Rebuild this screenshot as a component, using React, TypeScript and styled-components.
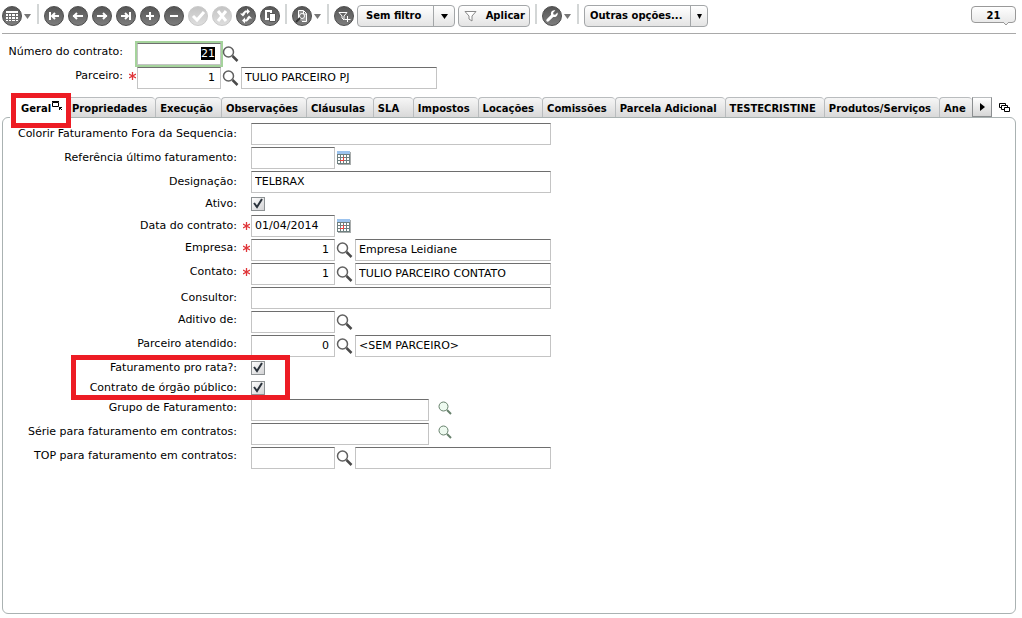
import React, { useEffect, useRef } from "react";
import styled, { createGlobalStyle, css } from "styled-components";

const GlobalStyle = createGlobalStyle`
  * { box-sizing: border-box; }
  body {
    margin: 0;
    background: #fff;
    color: #000;
    font-family: Verdana, "DejaVu Sans", sans-serif;
    font-size: 11px;
    line-height: 14px;
    overflow: hidden;
  }
  button, input, select { font: inherit; color: inherit; }
`;

const Page = styled.div`
  display: flex;
  flex-direction: column;
  min-height: 100vh;
  padding: 0 6px 4px 2px;
`;

const Toolbar = styled.header`
  display: flex;
  align-items: center;
  gap: 4px;
  height: 34px;
  padding-bottom: 1px;
  border-bottom: 1px solid #a9a9a9;
`;

const Divider = styled.span`
  width: 2px;
  height: 20px;
  margin: 0 1px 4px;
  background: #d3d6d6;
`;

const RoundButton = styled.button`
  flex: none;
  display: block;
  width: 20px;
  height: 20px;
  padding: 0;
  border: 1px solid #4c4c4c;
  border-radius: 50%;
  background: linear-gradient(#565656, #7d7d7d);
  color: #fff;

  &:disabled {
    border-color: #c9c9c9;
    background: linear-gradient(#c4c4c4, #dedede);
  }
  svg { display: block; }
`;

const MenuButton = styled.div`
  display: flex;
  align-items: center;
  gap: 2px;
  width: 30px;
`;

const ControlGroup = styled.div`
  display: flex;
  align-items: center;
  gap: 3px;
`;

const raised = css`
  height: 22px;
  border: 1px solid #a3a6a8;
  border-radius: 4px;
  background: linear-gradient(#fff, #e4e4e4);
  font-size: 10px;
  font-weight: bold;
`;

const SelectBox = styled.div<{ $width: number; $arrow: number }>`
  position: relative;
  width: ${(p) => p.$width}px;

  select {
    ${raised}
    display: block;
    width: 100%;
    padding: 0 0 0 ${(p) => (p.$arrow > 18 ? 8 : 5)}px;
    appearance: none;
  }
  > span {
    position: absolute;
    top: 1px;
    right: 1px;
    bottom: 1px;
    display: flex;
    align-items: center;
    justify-content: center;
    width: ${(p) => p.$arrow}px;
    border-left: 1px solid #a3a6a8;
    pointer-events: none;
  }
`;

const ApplyButton = styled.button`
  ${raised}
  display: flex;
  align-items: center;
  justify-content: space-between;
  width: 72px;
  padding: 0 4px 0 5px;
`;

const Counter = styled.output`
  position: relative;
  width: 45px;
  height: 17px;
  margin: 0 0 3px auto;
  border: 1px solid #999;
  border-radius: 4px;
  background: linear-gradient(#fff, #e9e9e9);
  font-size: 10px;
  font-weight: bold;
  line-height: 18px;
  text-align: center;

  svg {
    position: absolute;
    top: 15px;
    right: 5px;
  }
`;

const HeaderForm = styled.form`
  padding: 8px 0 7px;
`;

const Row = styled.div<{ $labelWidth: number; $short?: boolean }>`
  display: grid;
  grid-template-columns: ${(p) => p.$labelWidth}px 14px auto;
  justify-content: start;
  align-items: center;
  height: ${(p) => (p.$short ? 20 : 24)}px;
`;

const Label = styled.label<{ $raised?: boolean }>`
  padding-bottom: ${(p) => (p.$raised ? 4 : 0)}px;
  text-align: right;
  white-space: nowrap;
`;

const Star = styled.span<{ $raised?: boolean }>`
  display: flex;
  justify-content: flex-end;
  padding: 0 1px ${(p) => (p.$raised ? 4 : 0)}px 0;
`;

const Controls = styled.div`
  display: flex;
  align-items: center;
`;

const Field = styled.input<{ $size: "code" | "name" | "group" | "full" }>`
  width: ${(p) => ({ code: 84, name: 196, group: 178, full: 300 })[p.$size]}px;
  height: 22px;
  padding: 0 5px 2px 3px;
  border: 1px solid #c4c4c4;
  border-top-color: #6e6e6e;
  border-radius: 0;
  background: #fff;
  outline: none;

  &:focus { outline: 2px solid #a5d39c; }
  &::selection { background: #000; color: #fff; }
`;

const NumberField = styled(Field)`
  text-align: right;
`;

const IconButton = styled.button<{ $far?: boolean }>`
  display: block;
  width: 20px;
  height: 20px;
  margin-left: ${(p) => (p.$far ? 8 : 0)}px;
  padding: 0 0 0 1px;
  border: 0;
  background: none;
  svg { display: block; }
`;

const Tick = styled.input`
  width: 14px;
  height: 14px;
  margin: 0;
  border: 1px solid #8e9294;
  appearance: none;
  background: linear-gradient(135deg, #fff, #d2d2d4);
`;

const TickBox = styled.span`
  position: relative;
  display: flex;
  svg {
    position: absolute;
    left: 0;
    top: 0;
    pointer-events: none;
  }
  input:not(:checked) + svg { display: none; }
`;

const TabBar = styled.div`
  display: flex;
  align-items: flex-end;
  padding: 0 5px 0 8px;
`;

const TabStrip = styled.nav`
  display: flex;
  flex: 1;
  min-width: 0;
  height: 20px;
`;

const tabShape = css`
  flex: none;
  height: 20px;
  padding: 2px 8px 0 4px;
  font-size: 10px;
  font-weight: bold;
  text-align: left;
  white-space: nowrap;
`;

const Tab = styled.button`
  ${tabShape}
  min-width: 40px;
  border: 1px solid #b9bcbe;
  border-width: 1px 0 0 1px;
  border-radius: 4px 4px 0 0;
  background: linear-gradient(#f6f6f6, #d9d9d9);

  &:last-child {
    flex: 1 1 0;
    min-width: 0;
    padding-right: 0;
    overflow: hidden;
  }
`;

const ActiveTab = styled.button`
  ${tabShape}
  position: relative;
  z-index: 1;
  display: flex;
  gap: 1px;
  width: 57px;
  height: 21px;
  padding: 5px 0 0 11px;
  border: 0;
  background: #fff;

  > svg { margin-top: -1px; }
`;

const Highlight = styled.span<{ $area: "tab" | "rows" }>`
  position: absolute;
  border: 5px solid #ed1c24;
  pointer-events: none;
  ${(p) =>
    p.$area === "tab"
      ? "inset: -4px -4px -10px 1px;"
      : "left: 68px; top: -3px; width: 219px; bottom: -2px;"}
`;

const ScrollButton = styled.button`
  display: flex;
  align-items: center;
  justify-content: center;
  width: 20px;
  height: 20px;
  padding: 0;
  border: 1px solid #8b8e90;
  border-top-color: #b9bcbe;
  background: linear-gradient(#fff, #d6d6d6);
`;

const ListButton = styled.button`
  width: 12px;
  height: 14px;
  margin: 0 0 2px 7px;
  padding: 0;
  border: 0;
  background: none;
  svg { display: block; }
`;

const Panel = styled.form`
  flex: 1;
  padding-top: 4px;
  border: 1px solid #aab2b2;
  border-radius: 6px;
`;

const MarkedRows = styled.div`
  position: relative;
`;

const glyphs = {
  grid: (
    <path
      fill="currentColor"
      d="M3 4h12v2H3zM3 7h2v2H3zM6 7h2v2H6zM9 7h3v2H9zM13 7h2v2h-2zM3 10h2v2H3zM6 10h2v2H6zM9 10h3v2H9zM13 10h2v2h-2zM3 13h2v1H3zM6 13h2v1H6zM9 13h3v1H9zM13 13h2v1h-2z"
    />
  ),
  first: <path stroke="currentColor" strokeWidth="2" d="M5 5v8M7 9h7M10 6L7 9l3 3" />,
  prev: <path stroke="currentColor" strokeWidth="2" d="M4 9h10M8 6L5 9l3 3" />,
  next: <path stroke="currentColor" strokeWidth="2" d="M4 9h10M10 6l3 3-3 3" />,
  last: <path stroke="currentColor" strokeWidth="2" d="M13 5v8M4 9h7M8 6l3 3-3 3" />,
  plus: <path stroke="currentColor" strokeWidth="2" d="M5 9h8M9 5v8" />,
  minus: <path stroke="currentColor" strokeWidth="2" d="M5 9h8" />,
  check: <path stroke="currentColor" strokeWidth="3" d="M4 9l4 4 7-8" />,
  cross: <path stroke="currentColor" strokeWidth="3" d="M5 4l8 10M13 4L5 14" />,
  refresh: (
    <>
      <path stroke="currentColor" strokeWidth="2" d="M11 4.500H8.500L6 7M7 13.500h2.500L12 11" />
      <path fill="currentColor" d="M10 1.500l3 3-3 3zM8 10.500l-3 3 3 3zM3 6.500h5.500l-2.500 3zM9.500 11.500H15l-3-3z" />
    </>
  ),
  copy: (
    <>
      <path stroke="currentColor" strokeWidth="2" d="M8 12H5V4h5v2" />
      <path fill="currentColor" stroke="#555" d="M8.500 6.500h6v8h-6z" />
    </>
  ),
  preview: (
    <>
      <path fill="currentColor" fillOpacity="0.3" stroke="currentColor" d="M5.500 12V3.500h5l3 3v8H9M10.500 4v3h3" />
      <circle cx="9" cy="9" r="2.500" fill="#777" stroke="currentColor" />
      <path stroke="#333" strokeWidth="2" d="M7 11l-4 4" />
    </>
  ),
  filterPlus: (
    <>
      <path stroke="currentColor" d="M4 5.500h8L9 9v4l-2-2V9z" />
      <path stroke="currentColor" d="M12.500 9v6M9.500 12.500h6" />
    </>
  ),
  wrench: (
    <path
      fill="currentColor"
      d="M14.500 5.500l-2.300 2.200-1.700-.3-.4-1.700L12.300 3.500C10.500 2.800 8 4.100 7.900 6.400c0 .5.100 1 .2 1.400l-4.400 4.400c-1.300 1.500.6 3.500 2.100 2.100l4.400-4.400c2.900 1 5.200-1.900 4.300-4.400z"
    />
  ),
};

function Tool({ icon, label, disabled }: { icon: keyof typeof glyphs; label: string; disabled?: boolean }) {
  return (
    <RoundButton type="button" aria-label={label} disabled={disabled}>
      <svg width="18" height="18" viewBox="0 0 18 18" fill="none">
        {glyphs[icon]}
      </svg>
    </RoundButton>
  );
}

function Arrow({ color = "#000", width = 7 }: { color?: string; width?: number }) {
  return (
    <svg width={width} height="5" viewBox="0 0 7 5" preserveAspectRatio="none" aria-hidden="true">
      <path d="M0 0h7L3.500 5z" fill={color} />
    </svg>
  );
}

function Search({ small, label }: { small?: boolean; label: string }) {
  return (
    <IconButton type="button" aria-label={"Pesquisar " + label} $far={small}>
      {small ? (
        <svg width="18" height="20" viewBox="0 0 18 20" fill="none">
          <circle cx="5.500" cy="6.500" r="4.500" fill="#eefaf0" stroke="#66806b" />
          <path d="M9 10l4 4" stroke="#66806b" strokeWidth="2" />
        </svg>
      ) : (
        <svg width="18" height="20" viewBox="0 0 18 20" fill="none">
          <circle cx="6.500" cy="8" r="5" fill="#fff" stroke="#606060" strokeWidth="1.500" />
          <path d="M10.500 12l5 5" stroke="#4a4a4a" strokeWidth="2.500" />
        </svg>
      )}
    </IconButton>
  );
}

function Calendar({ label }: { label: string }) {
  return (
    <IconButton type="button" aria-label={"Calendário " + label}>
      <svg width="18" height="20" viewBox="0 0 18 20">
        <path d="M2 4h13v13H2z" fill="#a9adad" />
        <path d="M1 3h13v13H1z" fill="#6f8080" />
        <path d="M1 3h13v3H1z" fill="#9cc3ee" />
        <path
          d="M2 7h2v2H2zM5 7h2v2H5zM8 7h2v2H8zM11 7h2v2h-2zM2 10h2v2H2zM5 10h2v2H5zM8 10h2v2H8zM11 10h2v2h-2zM2 13h2v2H2zM5 13h2v2H5zM8 13h2v2H8zM11 13h2v2h-2z"
          fill="#fff"
        />
        <path d="M4 12.500h4M7.500 9v4" stroke="#f0403c" fill="none" />
      </svg>
    </IconButton>
  );
}

function Required() {
  return (
    <svg width="7" height="8" viewBox="0 0 7 8" aria-hidden="true">
      <path d="M3.500 0v8M0 2l7 4M7 2L0 6" stroke="#e0363a" strokeWidth="1.300" />
    </svg>
  );
}

type RowProps = {
  id: string;
  label: string;
  kind: "text" | "date" | "lookup" | "group" | "check";
  value?: string;
  name?: string;
  required?: boolean;
  labelWidth?: number;
  focused?: boolean;
};

function FormRow({ id, label, kind, value = "", name, required, labelWidth = 234, focused }: RowProps) {
  const ref = useRef<HTMLInputElement>(null);
  useEffect(() => {
    if (focused) {
      ref.current?.focus();
      ref.current?.select();
    }
  }, [focused]);
  const lifted = kind === "lookup" || kind === "group";

  return (
    <Row $labelWidth={labelWidth} $short={kind === "check"}>
      <Label htmlFor={id} $raised={lifted}>
        {label}:
      </Label>
      <Star $raised={lifted}>{required && <Required />}</Star>
      <Controls>
        {kind === "text" && <Field id={id} $size="full" defaultValue={value} />}
        {kind === "date" && (
          <>
            <Field id={id} $size="code" defaultValue={value} />
            <Calendar label={label} />
          </>
        )}
        {kind === "lookup" && (
          <>
            <NumberField id={id} ref={ref} $size="code" defaultValue={value} />
            <Search label={label} />
            {name !== undefined && (
              <Field $size="name" aria-label={label + " - nome"} defaultValue={name} />
            )}
          </>
        )}
        {kind === "group" && (
          <>
            <Field id={id} $size="group" defaultValue={value} />
            <Search small label={label} />
          </>
        )}
        {kind === "check" && (
          <TickBox>
            <Tick id={id} type="checkbox" defaultChecked />
            <svg width="14" height="14" viewBox="0 0 14 14" fill="none">
              <path d="M3 6l3 4 5-8" stroke="#2b333c" strokeWidth="2" />
            </svg>
          </TickBox>
        )}
      </Controls>
    </Row>
  );
}

const tabs = [
  "Propriedades",
  "Execução",
  "Observações",
  "Cláusulas",
  "SLA",
  "Impostos",
  "Locações",
  "Comissões",
  "Parcela Adicional",
  "TESTECRISTINE",
  "Produtos/Serviços",
  "Ane",
];

export default function App() {
  return (
    <Page>
      <GlobalStyle />
      <Toolbar>
        <MenuButton>
          <Tool icon="grid" label="Modo grade" />
          <Arrow color="#777" />
        </MenuButton>
        <Divider />
        <Tool icon="first" label="Primeiro" />
        <Tool icon="prev" label="Anterior" />
        <Tool icon="next" label="Próximo" />
        <Tool icon="last" label="Último" />
        <Tool icon="plus" label="Incluir" />
        <Tool icon="minus" label="Excluir" />
        <Tool icon="check" label="Confirmar" disabled />
        <Tool icon="cross" label="Cancelar" disabled />
        <Tool icon="refresh" label="Atualizar" />
        <Tool icon="copy" label="Duplicar" />
        <Divider />
        <MenuButton>
          <Tool icon="preview" label="Visualizar" />
          <Arrow color="#777" />
        </MenuButton>
        <Divider />
        <ControlGroup>
          <Tool icon="filterPlus" label="Novo filtro" />
          <SelectBox $width={98} $arrow={21}>
            <select aria-label="Filtro">
              <option>Sem filtro</option>
            </select>
            <span>
              <Arrow />
            </span>
          </SelectBox>
          <ApplyButton type="button">
            <svg width="13" height="12" viewBox="0 0 13 12" fill="none">
              <path d="M1 1.500h11L8 6v5L5 9V6z" fill="#fff" stroke="#888" />
            </svg>
            Aplicar
          </ApplyButton>
        </ControlGroup>
        <Divider />
        <MenuButton>
          <Tool icon="wrench" label="Ferramentas" />
          <Arrow color="#777" />
        </MenuButton>
        <Divider />
        <SelectBox $width={124} $arrow={17}>
          <select aria-label="Outras opções">
            <option>Outras opções...</option>
          </select>
          <span>
            <Arrow width={5} />
          </span>
        </SelectBox>
        <Counter>
          21
          <svg width="8" height="5" viewBox="0 0 8 5">
            <path d="M1 0l3 3 3-3" fill="#e9e9e9" stroke="#999" />
          </svg>
        </Counter>
      </Toolbar>

      <HeaderForm>
        <FormRow id="numero" label="Número do contrato" kind="lookup" value="21" labelWidth={121} focused />
        <FormRow
          id="parceiro"
          label="Parceiro"
          kind="lookup"
          value="1"
          name="TULIO PARCEIRO PJ"
          labelWidth={121}
          required
        />
      </HeaderForm>

      <TabBar>
        <TabStrip>
          <ActiveTab type="button">
            Geral
            <svg width="11" height="10" viewBox="0 0 11 10" fill="none">
              <path d="M.5 1.500h6v4h-6zM0 .5h7" stroke="#000" />
              <path d="M7 6.500h3M7.500 6v3M8 7l2 2" stroke="#000" />
            </svg>
            <Highlight $area="tab" />
          </ActiveTab>
          {tabs.map((tab) => (
            <Tab type="button" key={tab}>
              {tab}
            </Tab>
          ))}
        </TabStrip>
        <ScrollButton type="button" aria-label="Próximas abas">
          <svg width="5" height="8" viewBox="0 0 5 8">
            <path d="M0 0v8l5-4z" />
          </svg>
        </ScrollButton>
        <ListButton type="button" aria-label="Lista de abas">
          <svg width="12" height="12" viewBox="0 0 12 12" fill="#fff" stroke="#000">
            <path d="M.5 1.500h6v4h-6z" />
            <path d="M2.500 3.500h6v4h-6z" />
            <path d="M5.500 5.500h5v4h-5z" />
          </svg>
        </ListButton>
      </TabBar>

      <Panel>
        <FormRow id="colorir" label="Colorir Faturamento Fora da Sequencia" kind="text" />
        <FormRow id="referencia" label="Referência último faturamento" kind="date" />
        <FormRow id="designacao" label="Designação" kind="text" value="TELBRAX" />
        <FormRow id="ativo" label="Ativo" kind="check" />
        <FormRow id="data" label="Data do contrato" kind="date" value="01/04/2014" required />
        <FormRow id="empresa" label="Empresa" kind="lookup" value="1" name="Empresa Leidiane" required />
        <FormRow id="contato" label="Contato" kind="lookup" value="1" name="TULIO PARCEIRO CONTATO" required />
        <FormRow id="consultor" label="Consultor" kind="text" />
        <FormRow id="aditivo" label="Aditivo de" kind="lookup" />
        <FormRow id="atendido" label="Parceiro atendido" kind="lookup" value="0" name="<SEM PARCEIRO>" />
        <MarkedRows>
          <FormRow id="prorata" label="Faturamento pro rata?" kind="check" />
          <FormRow id="publico" label="Contrato de órgão público" kind="check" />
          <Highlight $area="rows" />
        </MarkedRows>
        <FormRow id="grupo" label="Grupo de Faturamento" kind="group" />
        <FormRow id="serie" label="Série para faturamento em contratos" kind="group" />
        <FormRow id="top" label="TOP para faturamento em contratos" kind="lookup" name="" />
      </Panel>
    </Page>
  );
}
